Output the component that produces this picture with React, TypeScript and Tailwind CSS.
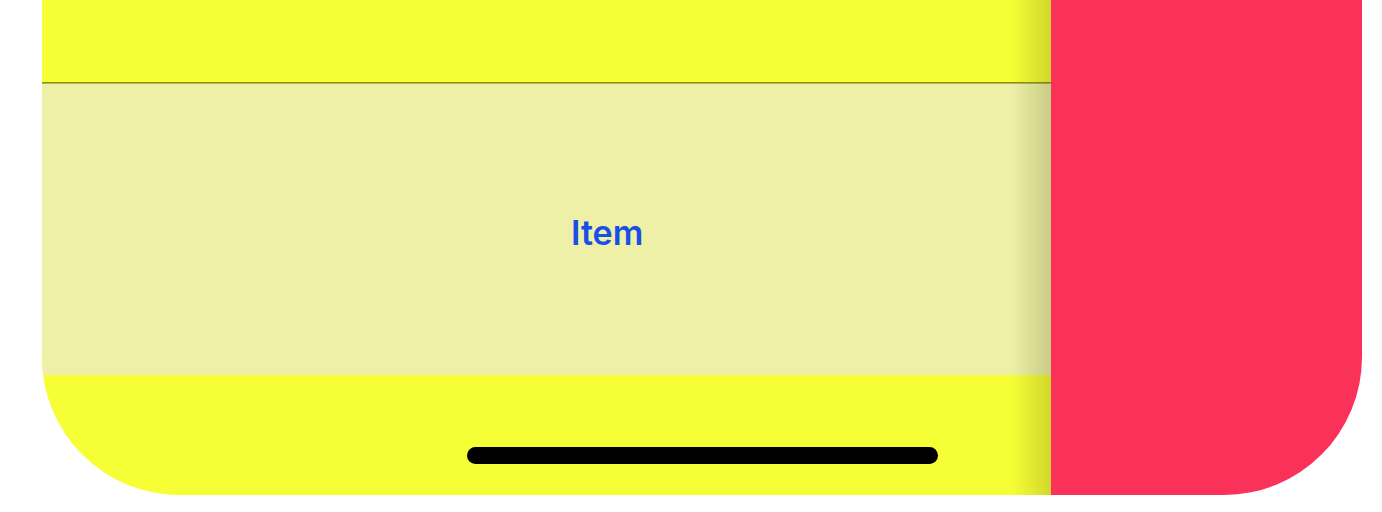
import React from "react";

export default function App() {
  return (
    <div className="w-[1382px] h-[512px] bg-white overflow-hidden">
      <div className="ml-[42px] w-[1320px] h-[495px] rounded-b-[138px] overflow-hidden flex">
        <div className="relative w-[1009px] flex flex-col bg-[#f6fe36]">
          <div className="h-[82px] bg-[#f6fe36]" />
          <div className="h-[1px] bg-[#8e9120]" />
          <div className="h-[1px] bg-[#b4b748]" />
          <div className="h-[291px] bg-[#edf0a6] flex items-center pl-[529px] pt-[6px]">
            <span
              className="text-[34px] font-semibold leading-none text-[#1a4fe6]"
              style={{ fontFamily: "Inter, 'Noto Sans', sans-serif" }}
            >
              Item
            </span>
          </div>
          <div className="flex-1 bg-[#f6fe36] pl-[425px] pt-[72px]">
            <div className="w-[471px] h-[17px] rounded-full bg-black" />
          </div>
          <div className="absolute top-0 right-0 h-full w-[40px] bg-gradient-to-r from-transparent to-[rgba(60,60,0,0.2)]" />
        </div>
        <div className="flex-1 bg-[#fa325a]" />
      </div>
    </div>
  );
}
